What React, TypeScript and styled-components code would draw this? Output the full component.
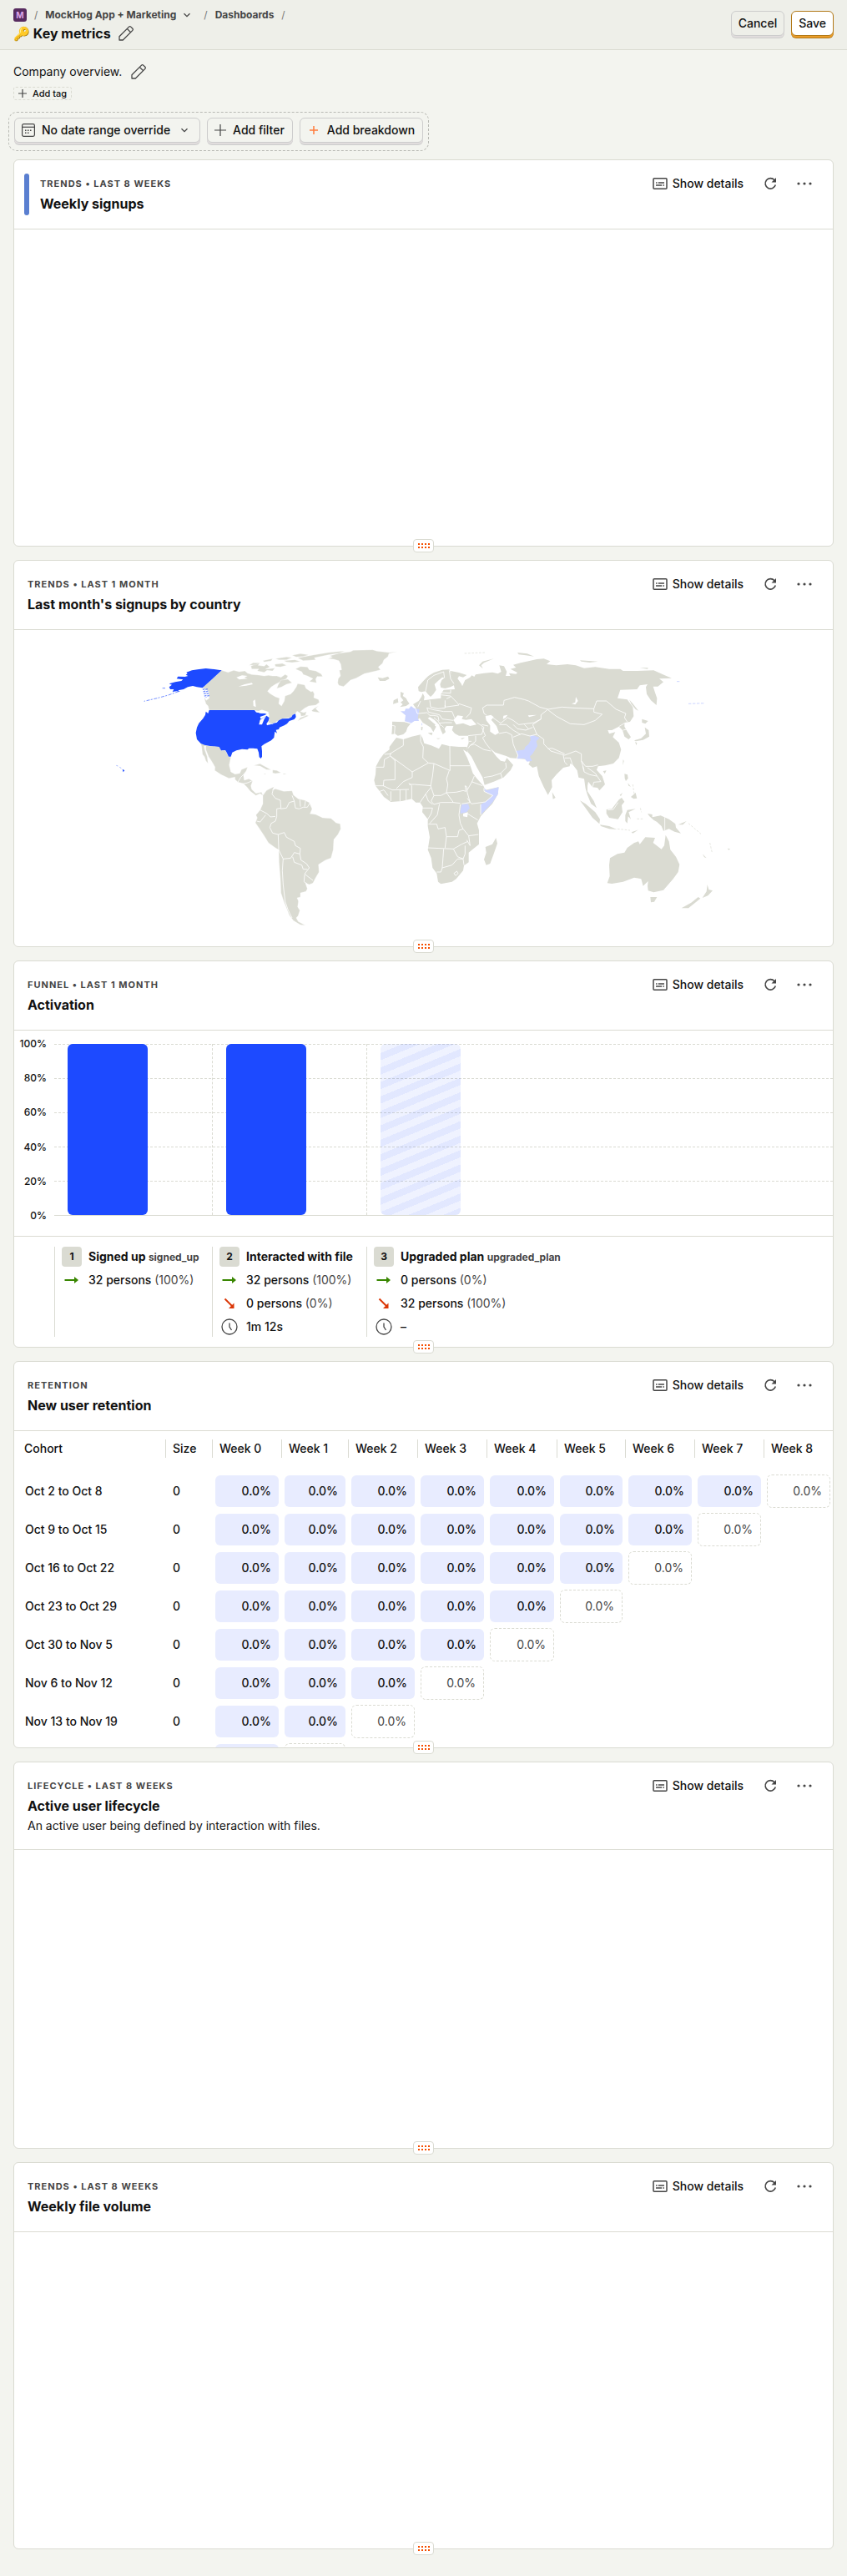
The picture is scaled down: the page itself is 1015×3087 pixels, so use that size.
import React from "react";
import styled, { createGlobalStyle } from "styled-components";

const GlobalStyle = createGlobalStyle`
  *, *::before, *::after { box-sizing: border-box; }
  body {
    margin: 0;
    background: #f3f4ef;
    color: #111;
    font-family: Inter, "Liberation Sans", sans-serif;
    font-size: 14px;
    line-height: 20px;
  }
  button { font: inherit; color: inherit; cursor: pointer; }
  h1, h2, p { margin: 0; }
  svg { display: block; flex: none; }
`;

const LINE = "#dadbd2";
const MUTED = "#454545";
const BLUE = "#1d4aff";

/* ---------- icons ---------- */

const IconEdit = () => (
  <svg width="20" height="20" viewBox="0 0 20 20" fill="none" stroke={MUTED} strokeWidth="1.300" strokeLinejoin="round">
    <path d="M2 18v-4.300L13.600 2.100a1.500 1.500 0 0 1 2.100 0l2.200 2.200a1.500 1.500 0 0 1 0 2.100L6.300 18zM11.300 4.400l4.300 4.300" />
  </svg>
);

const IconChevron = ({ size = 10 }: { size?: number }) => (
  <svg width={size} height={size} viewBox="0 0 10 10" fill="none" stroke={MUTED} strokeWidth="1.300">
    <path d="M1.500 3.300 5 6.700l3.500-3.400" />
  </svg>
);

const IconPlus = ({ size, color = MUTED, weight = 1.2 }: { size: number; color?: string; weight?: number }) => (
  <svg width={size} height={size} viewBox={`0 0 ${size} ${size}`} stroke={color} strokeWidth={weight}>
    <path d={`M${size / 2} 0V${size}M0 ${size / 2}H${size}`} />
  </svg>
);

const IconCalendar = () => (
  <svg width="16" height="16" viewBox="0 0 16 16" fill="none" stroke={MUTED} strokeWidth="1.200">
    <rect x="0.600" y="0.600" width="14.800" height="14.800" rx="1.800" />
    <path d="M0.600 4.300h14.800" />
    <path d="M4 8.300h8.500M4 11.300h6" strokeDasharray="1.500 1.500" strokeWidth="1.400" />
  </svg>
);

const IconDetails = () => (
  <svg width="18" height="14" viewBox="0 0 18 14" fill="none" stroke={MUTED} strokeWidth="1.500">
    <rect x="1" y="0.800" width="16" height="12.400" rx="1" />
    <path d="M4 6h1.500M6.800 6H14M4 9h7.200M12.500 9H14" />
  </svg>
);

const IconRefresh = () => (
  <svg width="16" height="16" viewBox="0 0 16 16" fill="none" stroke={MUTED} strokeWidth="1.600">
    <path d="M13 3.800A6.200 6.200 0 1 0 14.300 9.500" />
    <path d="M15 1v5.500H9.500z" fill={MUTED} stroke="none" />
  </svg>
);

const IconMore = () => (
  <svg width="18" height="4" viewBox="0 0 18 4" fill={MUTED}>
    <circle cx="2" cy="2" r="1.600" />
    <circle cx="9" cy="2" r="1.600" />
    <circle cx="16" cy="2" r="1.600" />
  </svg>
);

const IconConverted = () => (
  <svg width="20" height="20" viewBox="0 0 20 20" fill="none" stroke="#388600" strokeWidth="2">
    <path d="M1.500 10H14" />
    <path d="M13 6l5 4-5 4z" fill="#388600" stroke="none" />
  </svg>
);

const IconDropped = () => (
  <svg width="20" height="20" viewBox="0 0 20 20" fill="none" stroke="#db3707" strokeWidth="2">
    <path d="M4.500 4.500 13 13" />
    <path d="M15.500 9.500V16H9z" fill="#db3707" stroke="none" />
  </svg>
);

const IconClock = () => (
  <svg width="20" height="20" viewBox="0 0 20 20" fill="none" stroke={MUTED} strokeWidth="1.300">
    <circle cx="10" cy="10" r="9" />
    <path d="M10 5.500V10l2.500 4" />
  </svg>
);

const IconGrip = () => (
  <svg width="17" height="6" viewBox="0 0 17 6" fill="#f54e00" shapeRendering="crispEdges">
    {[2, 6, 10, 14].map((x) => (
      <React.Fragment key={x}>
        <rect x={x} y="0" width="2" height="2" />
        <rect x={x} y="4" width="2" height="2" />
      </React.Fragment>
    ))}
  </svg>
);

/* ---------- page header ---------- */

const Header = styled.header`
  display: flex;
  justify-content: space-between;
  align-items: flex-start;
  height: 60px;
  padding: 10px 16px 0;
  background: #eeefe9;
  border-bottom: 1px solid ${LINE};
`;

const Crumbs = styled.nav`
  display: flex;
  align-items: center;
  gap: 9px;
  height: 16px;
  font-size: 12px;
  line-height: 16px;
  font-weight: 700;
  color: ${MUTED};
  a { color: inherit; text-decoration: none; display: flex; align-items: center; gap: 8px; }
  a svg { margin-right: 6px; }
`;

const Slash = styled.span`
  font-weight: 400;
  color: #777;
`;

const Lettermark = styled.span`
  display: grid;
  place-items: center;
  width: 16px;
  height: 16px;
  border-radius: 3px;
  background: #572b5f;
  color: #dba5e8;
  font-size: 10px;
  font-weight: 700;
`;

const TitleRow = styled.div`
  display: flex;
  align-items: center;
  gap: 8px;
  height: 28px;
`;

const PageTitle = styled.h1`
  font-size: 16px;
  line-height: 24px;
  font-weight: 700;
`;

const IconButton = styled.button`
  display: grid;
  place-items: center;
  padding: 0;
  border: 0;
  background: none;
`;

const Actions = styled.div`
  display: flex;
  gap: 8px;
  padding-top: 3px;
`;

const RaisedButton = styled.button<{ $primary?: boolean }>`
  display: flex;
  align-items: center;
  height: 30px;
  margin-bottom: 3px;
  padding: 0 8px;
  border: 1px solid ${(p) => (p.$primary ? "#b17816" : "#cccccc")};
  border-radius: 6px;
  background: ${(p) => (p.$primary ? "#fff" : "inherit")};
  box-shadow: ${(p) => (p.$primary ? "0 2px 0 #eb9d2a, 0 3px 0 #b17816" : "0 2px 0 #e1dddd, 0 3px 0 #cccccc")};
  font-weight: 500;
`;

/* ---------- dashboard ---------- */

const Main = styled.main`
  padding: 16px 16px 32px;
`;

const Intro = styled.div`
  display: flex;
  align-items: center;
  gap: 10px;
  height: 20px;
`;

const TagButton = styled.button`
  display: flex;
  align-items: center;
  gap: 7px;
  height: 16px;
  margin-top: 8px;
  padding: 0 5px;
  border: 1px dashed ${LINE};
  border-radius: 3px;
  background: none;
  font-size: 11px;
  line-height: 14px;
  font-weight: 500;
`;

const FilterBar = styled.div`
  display: flex;
  gap: 8px;
  width: fit-content;
  margin: 14px 0 10px -6px;
  padding: 6px;
  border: 1px dashed #b9bab4;
  border-radius: 10px;
  background: #f3f4ef;
`;

const FilterButton = styled(RaisedButton)`
  gap: 8px;
  padding: 0 9px 0 8px;
`;

const ChevronSlot = styled.span`
  display: flex;
  padding: 0 4px;
`;

const PlusSlot = styled.span`
  display: flex;
  padding: 0 3px;
`;

const Tiles = styled.div`
  display: grid;
  grid-auto-rows: 464px;
  gap: 16px;
`;

const Tile = styled.section`
  position: relative;
  display: flex;
  flex-direction: column;
  border: 1px solid ${LINE};
  border-radius: 6px;
  background: #fff;
`;

const TileHeader = styled.div`
  display: flex;
  gap: 13px;
  padding: 16px 16px 16px 12px;
  min-height: 83px;
  border-bottom: 1px solid ${LINE};
`;

const Ribbon = styled.span`
  width: 6px;
  height: 50px;
  border-radius: 3px;
  background: #5a7fd0;
`;

const TileHead = styled.div<{ $indent: boolean }>`
  flex: 1;
  padding-left: ${(p) => (p.$indent ? 4 : 0)}px;
`;

const Kicker = styled.div`
  display: flex;
  align-items: center;
  height: 24px;
  font-size: 11px;
  line-height: 16px;
  font-weight: 700;
  letter-spacing: 1px;
  text-transform: uppercase;
  color: ${MUTED};
`;

const TileTitle = styled.h2`
  font-size: 16px;
  line-height: 24px;
  font-weight: 700;
`;

const TileNote = styled.p`
  line-height: 24px;
`;

const Controls = styled.div`
  display: flex;
  align-items: center;
  height: 24px;
  gap: 24px;
  padding-right: 9px;
`;

const DetailsButton = styled(IconButton)`
  display: flex;
  align-items: center;
  gap: 6px;
  font-weight: 500;
`;

const TileBody = styled.div`
  flex: 1;
  min-height: 0;
  overflow: hidden;
`;

const ResizeHandle = styled.button`
  position: absolute;
  left: 0;
  right: 0;
  bottom: -8px;
  margin: 0 auto;
  display: grid;
  place-items: center;
  width: 25px;
  height: 16px;
  padding: 0;
  border: 1px solid ${LINE};
  border-radius: 4px;
  background: #fff;
`;

type InsightTileProps = {
  kicker: string;
  title: string;
  note?: string;
  ribbon?: boolean;
  children?: React.ReactNode;
};

const InsightTile = ({ kicker, title, note, ribbon = false, children }: InsightTileProps) => (
  <Tile>
    <TileHeader>
      {ribbon && <Ribbon />}
      <TileHead $indent={!ribbon}>
        <Kicker>{kicker}</Kicker>
        <TileTitle>{title}</TileTitle>
        {note && <TileNote>{note}</TileNote>}
      </TileHead>
      <Controls>
        <DetailsButton type="button"><IconDetails />Show details</DetailsButton>
        <IconButton type="button" aria-label="Refresh"><IconRefresh /></IconButton>
        <IconButton type="button" aria-label="More"><IconMore /></IconButton>
      </Controls>
    </TileHeader>
    <TileBody>{children}</TileBody>
    <ResizeHandle type="button" aria-label="Resize"><IconGrip /></ResizeHandle>
  </Tile>
);

/* ---------- world map ---------- */

const MapSvg = styled.svg`
  width: 100%;
  height: 100%;
`;

const AMERICAS = [
  // Greenland
  "795,78 830,68 870,63 880,58 950,56 965,61 1010,66 1038,62 1008,70 1005,80 990,92 985,105 970,118 978,128 950,135 920,142 890,158 870,165 852,182 845,188 828,184 824,175 826,160 834,150 830,130 838,128 835,108 828,95 810,90 790,88 805,82",
  // Canada
  "407,130 338,193 348,196 360,205 362,230 352,238 344,228 350,250 358,258 362,273 525,273 540,278 552,272 575,280 578,300 575,318 590,322 612,310 630,303 655,300 665,288 672,285 678,277 690,284 692,295 712,292 690,300 680,312 700,302 720,293 708,290 712,278 702,282 690,278 705,266 720,258 745,255 758,245 755,235 738,228 740,215 735,205 728,207 710,195 705,182 680,178 675,190 665,205 655,215 635,222 632,240 622,258 612,250 615,230 600,225 580,213 572,205 585,190 600,180 620,170 640,160 645,150 635,145 620,155 605,150 590,150 575,148 560,150 540,147 515,145 500,140 490,132 470,135 450,130 430,137",
  // Arctic islands
  "512,115 525,108 545,102 538,112 560,115 568,108 580,118 565,125 598,122 590,132 570,130 560,137 535,132 540,125 515,125",
  "505,112 520,103 542,103 530,110",
  "598,108 625,105 640,112 618,118 600,116",
  "672,125 690,116 715,118 722,128 745,132 765,143 770,152 750,152 745,162 748,175 722,170 735,160 715,150 700,145 695,135",
  "620,165 645,162 660,175 640,180 622,190 605,195 610,182",
  "555,95 590,88 585,96 560,100", "600,88 640,82 660,84 640,92 612,92", "630,95 670,92 690,98 660,102 640,100",
  "680,85 740,74 790,66 850,60 830,68 790,74 740,85 745,92 700,95", "660,76 690,70 720,74 700,80 675,82",
  "735,278 760,282 745,268 755,258 740,266 730,275",
  // Mexico and Central America
  "332,393 345,398 365,402 398,403 408,418 420,417 432,440 440,442 434,470 440,495 455,503 472,500 478,487 500,478 495,492 485,505 488,525 505,520 518,528 512,545 515,558 530,572 550,568 555,580 545,573 530,580 510,565 498,550 485,537 465,532 455,522 455,514 433,518 405,505 382,490 383,478 370,455 360,440 350,415 350,402 344,402 346,415 355,440 358,465 350,455 345,440 338,432 335,405",
  "522,472 545,466 575,482 585,488 568,487 545,474", "590,488 605,490 620,498 600,501 590,499", "628,501 638,502 636,504 628,504", "558,501 568,502 562,504",
  // South America
  "555,580 568,562 595,548 590,560 600,556 630,565 660,563 665,578 682,592 705,597 722,605 732,628 725,645 745,648 770,660 800,662 818,678 833,682 835,700 825,720 810,738 808,775 800,805 780,812 755,828 757,855 745,875 735,895 722,900 708,895 715,915 710,925 690,930 690,945 678,948 683,960 680,980 688,993 682,1012 675,1020 682,1033 708,1047 690,1045 665,1030 650,1010 640,985 630,960 620,930 618,880 613,820 612,775 600,768 575,750 560,725 540,695 528,678 535,660 530,650 545,632 555,610",
];

const USA = [
  "362,273 525,273 530,280 548,284 575,284 560,292 545,297 548,305 568,293 578,300 575,312 568,322 570,328 590,320 605,318 612,310 625,304 648,303 658,298 662,290 672,286 674,298 668,306 650,312 642,322 632,328 615,335 612,342 602,344 606,356 598,350 595,372 585,382 560,395 550,403 552,420 552,440 548,447 542,442 540,425 535,412 520,410 505,410 500,415 480,413 460,418 445,425 440,440 432,440 425,425 420,417 405,418 398,405 380,403 365,402 345,398 332,393 318,378 314,355 318,335 325,320 340,303 348,290 350,278 358,285",
  "407,130 395,128 380,126 350,123 320,127 300,130 280,137 284,142 278,146 286,150 275,153 250,152 245,160 268,163 262,168 240,172 218,178 228,182 218,190 222,198 235,198 230,207 245,205 258,207 250,202 270,198 285,190 303,186 318,190 338,193",
  "50,485 58,490 53,496",
];

const OLD_WORLD = [
  // Iceland, Britain, Ireland
  "-142,155 -125,158 -105,152 -100,160 -115,168 -135,168",
  "-60,207 -48,212 -52,222 -40,230 -35,240 -28,250 -40,258 -62,262 -52,252 -60,245 -50,238 -60,225",
  "-85,238 -70,230 -68,245 -87,251",
  // Iberia
  "-90,314 -45,316 -24,322 -35,335 -40,350 -50,360 -70,365 -80,358 -92,360 -90,335",
  // Scandinavia
  "3,190 20,170 40,150 60,138 90,128 115,127 124,145 130,168 134,182 120,190 100,195 85,192 82,180 88,165 98,157 90,155 78,165 62,180 68,200 58,215 48,225 38,215 30,205 15,208 5,205",
  // Eurasian mainland
  "120,132 150,138 178,147 165,155 150,151 145,160 158,178 162,187 172,165 190,155 196,148 205,153 210,145 240,140 270,137 290,142 302,135 295,112 312,115 322,135 318,150 335,150 330,140 355,143 360,138 335,125 355,120 345,110 372,103 400,97 430,90 455,88 478,97 465,108 500,112 540,108 570,112 600,122 640,118 690,125 730,125 740,132 790,132 850,130 890,148 915,158 870,160 885,172 865,188 848,188 855,210 862,230 860,255 840,238 825,215 822,190 828,180 800,184 790,198 730,200 720,230 755,235 775,262 778,295 765,315 745,318 745,332 755,350 768,370 760,378 745,368 738,345 725,332 700,345 685,345 690,358 712,352 703,370 725,390 733,415 725,445 705,465 675,472 650,475 645,488 665,510 675,540 655,562 648,552 630,550 615,530 612,545 612,565 635,600 645,625 625,610 612,578 605,555 600,520 580,515 575,490 560,470 550,465 548,475 525,480 500,505 483,525 485,550 470,578 455,550 437,510 430,475 415,480 400,468 405,458 390,450 370,448 335,445 320,438 308,434 280,425 262,410 285,440 300,455 315,458 322,445 345,470 335,490 310,515 275,530 242,542 235,515 215,480 195,440 183,425 178,410 185,390 183,365 150,365 135,357 125,345 130,330 105,330 98,340 102,352 92,360 85,345 78,325 62,308 45,298 38,302 65,325 58,340 50,332 45,325 20,305 10,300 -5,312 0,285 -8,262 -15,252 5,240 15,225 20,212 26,225 24,238 45,235 85,230 85,215 95,200 135,198",
  // Italy and the Mediterranean islands
  "5,297 32,297 38,312 68,332 58,352 48,335 20,318", "38,355 55,354 52,364", "14,333 20,334 18,346 14,345", "68,374 85,374 75,377", "155,375 172,371 162,378",
  // Russian Arctic
  "222,112 235,98 275,88 240,103 230,112 236,124", "360,66 395,70 420,80 390,76 365,73", "585,94 650,98 620,102 590,98", "800,121 830,121 828,125",
  // Sakhalin and Japan
  "762,235 775,250 795,275 785,270 770,252",
  "808,305 830,312 820,322 808,318", "818,335 832,345 834,368 812,380 785,385 780,382 805,374 822,358", "783,388 790,390 788,400",
  // South-east Asia
  "740,450 743,456 739,472", "668,492 680,490 674,502", "485,568 497,588 488,593",
  "745,502 756,505 758,518 750,528 746,518", "757,535 768,548 760,545", "768,585 785,570 790,590 778,592", "728,578 738,570 732,582",
  "585,598 605,610 640,640 657,665 655,682 630,660 605,625", "657,685 690,690 718,702 690,700 660,690",
  "680,630 700,628 725,595 735,588 745,602 735,615 738,640 722,665 690,660 680,645", "748,650 755,632 785,628 760,640 768,665 758,655 755,680 748,672", "770,712 795,703 775,716",
  "828,645 845,648 845,658 875,652 905,665 928,682 930,695 948,716 925,710 905,700 885,707 878,690 862,675 850,668 835,655", "938,685 968,672 955,685",
  // Australia and New Zealand
  "693,805 720,790 745,785 755,768 780,750 795,745 800,755 820,730 855,732 848,750 878,773 888,760 893,722 905,745 910,775 930,800 943,828 938,855 920,880 885,920 850,928 830,922 828,905 830,888 812,905 805,880 780,875 740,890 700,897 683,895 692,870 690,830",
  "838,945 862,945 852,962 840,964",
  "1043,900 1048,918 1062,922 1045,940 1025,948 1040,925", "1010,945 1018,950 975,985 950,985 985,965", "1025,790 1040,805 1032,802", "1115,770 1125,772 1120,776",
  // Madagascar
  "283,732 288,752 275,790 262,825 248,830 240,810 248,785 245,765 270,755",
  // Africa
  "-75,372 -50,378 -20,368 12,361 20,375 25,392 50,400 78,412 88,395 115,402 150,405 178,405 182,425 165,415 180,445 190,470 200,500 215,520 238,545 245,560 292,550 290,575 270,610 245,635 228,655 215,680 222,705 222,755 185,785 185,820 168,832 165,850 140,880 125,890 85,898 75,890 70,860 55,840 50,805 38,775 45,730 38,690 38,665 18,640 20,620 10,605 -5,605 -20,592 -55,600 -95,603 -120,585 -135,565 -150,545 -155,525 -150,505 -148,475 -135,450 -120,430 -100,415 -100,405 -85,385",
];

const LIGHT = [
  "-60,277 -45,277 -42,268 -30,268 -22,258 -12,266 8,270 5,285 2,300 6,312 -10,312 -22,320 -45,314 -42,292",
  "240,553 250,562 293,550 290,575 270,605 245,632 230,648 228,612 245,603 272,580 245,568",
  "160,612 183,610 188,625 178,640 155,645 155,633",
  "355,420 385,415 388,405 400,395 408,380 405,366 415,362 440,372 428,385 432,402 415,430 405,440 413,455 395,458 385,447 358,448 362,435",
  "15,320 18,320 18,328 16,328",
];

const WATER_WEST = [
  "460,155 480,148 500,150 488,156 500,160 470,163", "467,188 490,180 515,175 519,180 495,185", "520,240 527,235 530,262 521,258",
  "530,280 550,272 572,280 575,290 562,285 548,284", "541,325 545,308 568,293 560,305 552,325", "572,326 598,318 590,323",
];

const WATER_EAST = [
  "130,308 145,292 165,295 160,305 175,308 195,305 213,325 190,330 165,320 140,325",
  "245,295 265,290 275,298 266,308 285,330 294,355 280,362 262,350 262,328 248,310",
  "310,293 325,290 318,300 308,305", "398,292 430,290 402,298", "555,250 568,245 570,225 578,240 568,253", "165,645 182,640 180,658 165,655",
];

const BORDERS_WEST =
  "M592,558 588,575 600,590 618,597 620,625 605,628 605,655 600,672 585,680 580,695 590,715 610,720 612,775M545,632 570,645 582,657 600,655M533,672 545,675 565,650M610,720 632,713 640,730 668,745 672,760 690,770 688,790M612,775 628,808 655,805 668,785 688,790 692,812 712,825 722,840M662,800 668,820 695,830 700,845 715,845M628,808 625,850 628,900 635,960 645,990 660,1020M722,840 705,862 735,885M705,865 703,890 715,898M618,628 640,625 650,605 668,600 660,580M668,600 672,625 685,628 700,622 715,622 725,605M688,595 690,620M708,600 705,620M725,645 740,640M465,532 475,515 485,505M485,537 498,535 515,528";

const BORDERS_EAST =
  "M117,400 118,490 60,465 40,463 -18,495M12,361 12,385 22,405 20,445 40,463M118,473 190,473M105,570 110,540 105,520 115,490M60,465 55,510 48,545 60,580 85,580 105,570 130,605M105,570 140,568 165,562 175,565 172,545 178,548 180,570 190,605 160,610M180,560 197,530 205,510M195,530 235,545M240,553 240,565 272,580 245,603 195,610 180,590M228,650 228,612M60,580 50,600 60,612 85,605 130,605 155,608M155,612 150,650 155,680 165,700 185,725M180,645 218,668M185,725 220,720M185,725 190,760 178,740M40,683 70,683 75,700 100,695 105,728 145,728 150,705 165,700M38,768 130,772 160,755 182,745M95,772 90,840 85,855 70,855M90,840 125,830 145,808 165,808 168,830M130,772 145,800 165,808 172,790 172,760M105,728 100,768M132,860 142,852 147,860 138,868zM-98,437 -18,495M-80,450 -80,523 -120,525M-98,437 -95,430 -118,432M-98,437 -80,455M-50,378 -50,400 -98,430M-100,440 -118,450 -120,478 -148,478M-18,495 -18,515 -50,530 -75,555M-30,540 -10,540 50,545M-20,592 -20,545 -30,535M-40,600 -40,560M-62,600 -62,560M-95,600 -95,565M-120,525 -122,545 -90,560 -30,558M-150,545 -120,545M-135,565 -120,560 -105,580M10,605 30,575 50,550M18,625 55,625 50,645 35,670M80,610 72,650 45,680M30,575 40,600 55,612" +
  "M235,265 250,255 310,255 312,238 350,227 385,235 400,240 440,262 470,270 445,290 445,305 420,318 390,322 365,325 345,310 325,300 300,320 272,300M235,265 240,285 250,292M470,270 520,262 560,265 635,268 645,240 680,240 715,270 750,285 745,300 755,315M470,272 500,295 550,322 600,325 640,310 665,288 635,280 635,268M445,305 415,325 430,360 455,378 455,395 480,420 530,435 570,420 590,430 590,455 605,475 630,475 650,470M470,412 485,410 530,430M525,435 530,460 540,470M530,445 550,445 558,470M295,325 320,325 345,345 370,360M345,325 360,340 390,345 415,335M385,325 400,340M232,335 245,365 235,372 245,390 262,412M294,357 320,352 340,362 345,395 355,420 362,435 358,448M345,370 375,358 405,366 430,360M183,365 210,362 232,360 240,335 215,318M232,325 255,330M183,410 190,400 205,395 240,415 265,420M210,365 210,385 190,400M185,385 195,385M240,515 270,510 300,500 320,480 318,462M300,500 305,518M595,475 600,495 620,505 645,510M612,480 640,500 660,530M630,550 635,532 660,530M590,455 600,490M725,332 745,320M740,345 752,342" +
  "M-8,262 0,285 5,285 35,282 45,292M12,240 2,262M45,238 48,262 75,268 100,265 100,238M35,265 60,272 95,278 125,278 135,302M100,255 100,262 150,255 145,248 120,222 85,218M85,210 120,212 120,200M120,225 105,232M150,250 195,265 190,285 175,300M35,265 40,280 60,285 80,290M45,292 60,292 75,295 78,312M60,300 75,312 85,330M80,290 90,305 130,310M78,320 100,318 125,318M88,328 95,335M115,130 120,160 132,178M30,205 38,165 60,148 95,135 98,157M-90,328 -80,330 -82,358M-24,320 -45,314M890,658 890,705M685,632 705,630 722,605";

const Shapes = ({ points, fill }: { points: string[]; fill: string }) => (
  <g fill={fill}>
    {points.map((p) => (
      <polygon key={p} points={p} />
    ))}
  </g>
);

const WorldMap = () => (
  <MapSvg viewBox="-339 -15 2943 1137" role="img" aria-label="Signups by country">
    <g>
      <g stroke="#fff" strokeWidth="1">
        <Shapes points={AMERICAS} fill={LINE} />
      </g>
      <Shapes points={USA} fill={BLUE} />
      <Shapes points={WATER_WEST} fill="#fff" />
      <path d={BORDERS_WEST} fill="none" stroke="#fff" strokeWidth="2.500" />
      <path d="M252,206 215,219 175,230 128,241M194,194 204,194" fill="none" stroke={BLUE} strokeWidth="3" strokeDasharray="12 5 6 4" opacity="0.600" />
      <path d="M342,196 350,228M352,196 360,226" fill="none" stroke={BLUE} strokeWidth="8" strokeDasharray="4 4" opacity="0.600" />
      <path d="M28,472 34,474M40,478 46,482" fill="none" stroke={BLUE} strokeWidth="2" opacity="0.600" />
    </g>
    <g transform="translate(1110 0)">
      <Shapes points={OLD_WORLD} fill={LINE} />
      <Shapes points={LIGHT} fill="#ccd5ff" />
      <Shapes points={WATER_EAST} fill="#fff" />
      <path d={BORDERS_EAST} fill="none" stroke="#fff" strokeWidth="2.500" />
      <path d="M933,170 945,170M975,250 1035,248" fill="none" stroke="#ccd5ff" strokeWidth="3" strokeDasharray="10 5" />
      <path d="M720,700 765,705M790,664 815,664M975,680 1020,718M1052,750 1060,785M170,69 245,66M775,540 780,575M802,625 806,640" fill="none" stroke={LINE} strokeWidth="2" strokeDasharray="8 5" />
    </g>
  </MapSvg>
);

/* ---------- funnel ---------- */

const STEP_COLUMNS = "189px 185px 1fr";

const Chart = styled.div`
  display: grid;
  grid-template-columns: 48px 1fr;
  height: 247px;
  padding-top: 16px;
  border-bottom: 1px solid ${LINE};
`;

const Axis = styled.div`
  display: flex;
  flex-direction: column;
  justify-content: space-between;
  height: 222px;
  margin-top: -8px;
  padding-right: 9px;
  text-align: right;
  font-size: 12px;
  line-height: 16px;
  font-weight: 500;
`;

const Plot = styled.div`
  display: grid;
  grid-template-columns: ${STEP_COLUMNS};
  height: 206px;
  border-bottom: 1px solid ${LINE};
  background: repeating-linear-gradient(to right, transparent 0 3px, #fff 3px 5px),
    repeating-linear-gradient(to bottom, ${LINE} 0 1px, transparent 1px 41px);
`;

const PlotStep = styled.div`
  padding-left: 16px;
  & + & { border-left: 1px dashed ${LINE}; }
`;

const Bar = styled.div<{ $empty?: boolean }>`
  width: 96px;
  height: 100%;
  border-radius: 6px;
  background: ${(p) =>
    p.$empty
      ? "repeating-linear-gradient(-22.5deg, rgba(29, 74, 255, 0.130) 0 8px, rgba(29, 74, 255, 0.070) 8px 16px)"
      : BLUE};
`;

const Legend = styled.div`
  display: grid;
  grid-template-columns: ${STEP_COLUMNS};
  height: 108px;
  margin: 12px 0 0 48px;
`;

const LegendStep = styled.div`
  display: flex;
  flex-direction: column;
  gap: 4px;
  padding-left: 8px;
  border-left: 1px solid ${LINE};
  white-space: nowrap;
`;

const LegendRow = styled.div<{ $strong?: boolean }>`
  display: flex;
  align-items: center;
  gap: 8px;
  height: 24px;
  font-weight: ${(p) => (p.$strong ? 700 : 500)};
`;

const Glyph = styled.span<{ $filled?: boolean }>`
  display: grid;
  place-items: center;
  width: 24px;
  height: 24px;
  border-radius: 4px;
  background: ${(p) => (p.$filled ? LINE : "none")};
  font-size: 12px;
`;

const Faint = styled.span`
  font-weight: 400;
  color: ${MUTED};
`;

const EventName = styled.span`
  font-size: 12px;
  font-weight: 700;
  color: ${MUTED};
`;

type Step = { name: string; event?: string; converted: [string, string]; dropped?: [string, string]; time?: string };

const STEPS: Step[] = [
  { name: "Signed up", event: "signed_up", converted: ["32 persons", "(100%)"] },
  { name: "Interacted with file", converted: ["32 persons", "(100%)"], dropped: ["0 persons", "(0%)"], time: "1m 12s" },
  { name: "Upgraded plan", event: "upgraded_plan", converted: ["0 persons", "(0%)"], dropped: ["32 persons", "(100%)"], time: "–" },
];

const Funnel = () => (
  <>
    <Chart>
      <Axis>
        {["100%", "80%", "60%", "40%", "20%", "0%"].map((t) => (
          <span key={t}>{t}</span>
        ))}
      </Axis>
      <Plot>
        {STEPS.map((s, i) => (
          <PlotStep key={s.name}><Bar $empty={i === 2} /></PlotStep>
        ))}
      </Plot>
    </Chart>
    <Legend>
      {STEPS.map((s, i) => (
        <LegendStep key={s.name}>
          <LegendRow $strong>
            <Glyph $filled>{i + 1}</Glyph>
            <span>{s.name} {s.event && <EventName>{s.event}</EventName>}</span>
          </LegendRow>
          <LegendRow>
            <Glyph><IconConverted /></Glyph>
            <span>{s.converted[0]} <Faint>{s.converted[1]}</Faint></span>
          </LegendRow>
          {s.dropped && (
            <LegendRow>
              <Glyph><IconDropped /></Glyph>
              <span>{s.dropped[0]} <Faint>{s.dropped[1]}</Faint></span>
            </LegendRow>
          )}
          {s.time && (
            <LegendRow><Glyph><IconClock /></Glyph>{s.time}</LegendRow>
          )}
        </LegendStep>
      ))}
    </Legend>
  </>
);

/* ---------- retention ---------- */

const Table = styled.table`
  width: 100%;
  table-layout: fixed;
  border-collapse: collapse;
  font-weight: 500;
`;

const HeadCell = styled.th`
  height: 49px;
  padding: 10px 0 17px;
  font-weight: 500;
  text-align: left;
  white-space: nowrap;
  span { display: block; padding-left: 8px; line-height: 22px; border-left: 1px solid ${LINE}; }
  &:first-child span { padding-left: 12px; border-left: 0; }
`;

const LabelCell = styled.td`
  height: 46px;
  padding: 0 0 0 9px;
  white-space: nowrap;
  &:first-child { padding-left: 13px; }
`;

const ValueCell = styled.td`
  height: 46px;
  padding: 0 3px 0 4px;
`;

const Value = styled.div<{ $partial?: boolean }>`
  height: ${(p) => (p.$partial ? 40 : 38)}px;
  line-height: 38px;
  padding-right: 9px;
  border: ${(p) => (p.$partial ? `1px dashed ${LINE}` : "0")};
  border-radius: 6px;
  background: ${(p) => (p.$partial ? "none" : "#e8ecff")};
  color: ${(p) => (p.$partial ? MUTED : "inherit")};
  font-weight: ${(p) => (p.$partial ? 400 : 500)};
  text-align: right;
`;

const COLUMN_WIDTHS = [181, 56, 83, 80, 83, 83, 84, 82, 83, 83];
const WEEKS = [0, 1, 2, 3, 4, 5, 6, 7, 8];
const COHORTS = [
  "Oct 2 to Oct 8",
  "Oct 9 to Oct 15",
  "Oct 16 to Oct 22",
  "Oct 23 to Oct 29",
  "Oct 30 to Nov 5",
  "Nov 6 to Nov 12",
  "Nov 13 to Nov 19",
  "",
];

const Retention = () => (
  <Table>
    <colgroup>
      {COLUMN_WIDTHS.map((w, i) => (
        <col key={i} width={w} />
      ))}
      <col />
    </colgroup>
    <thead>
      <tr>
        <HeadCell><span>Cohort</span></HeadCell>
        <HeadCell><span>Size</span></HeadCell>
        {WEEKS.map((w) => (
          <HeadCell key={w}><span>Week {w}</span></HeadCell>
        ))}
      </tr>
    </thead>
    <tbody>
      {COHORTS.map((label, row) => (
        <tr key={label}>
          <LabelCell>{label}</LabelCell>
          <LabelCell>{label && "0"}</LabelCell>
          {WEEKS.map((w) => (
            <ValueCell key={w}>
              {w <= 8 - row && <Value $partial={w === 8 - row}>{label && "0.0%"}</Value>}
            </ValueCell>
          ))}
        </tr>
      ))}
    </tbody>
  </Table>
);

/* ---------- page ---------- */

export default function App() {
  return (
    <>
      <GlobalStyle />
      <Header>
        <div>
          <Crumbs aria-label="Breadcrumb">
            <Lettermark>M</Lettermark>
            <Slash>/</Slash>
            <a href="#project">MockHog App + Marketing <IconChevron /></a>
            <Slash>/</Slash>
            <a href="#dashboards">Dashboards</a>
            <Slash>/</Slash>
          </Crumbs>
          <TitleRow>
            <PageTitle>🔑 Key metrics</PageTitle>
            <IconButton type="button" aria-label="Edit title"><IconEdit /></IconButton>
          </TitleRow>
        </div>
        <Actions>
          <RaisedButton type="button">Cancel</RaisedButton>
          <RaisedButton type="button" $primary>Save</RaisedButton>
        </Actions>
      </Header>
      <Main>
        <Intro>
          <p>Company overview.</p>
          <IconButton type="button" aria-label="Edit description"><IconEdit /></IconButton>
        </Intro>
        <TagButton type="button"><IconPlus size={10} />Add tag</TagButton>
        <FilterBar>
          <FilterButton type="button">
            <IconCalendar />No date range override<ChevronSlot><IconChevron /></ChevronSlot>
          </FilterButton>
          <FilterButton type="button"><IconPlus size={14} />Add filter</FilterButton>
          <FilterButton type="button">
            <PlusSlot><IconPlus size={10} color="#ff7b3d" weight={1.5} /></PlusSlot>Add breakdown
          </FilterButton>
        </FilterBar>
        <Tiles>
          <InsightTile kicker="Trends • Last 8 weeks" title="Weekly signups" ribbon />
          <InsightTile kicker="Trends • Last 1 month" title="Last month's signups by country"><WorldMap /></InsightTile>
          <InsightTile kicker="Funnel • Last 1 month" title="Activation"><Funnel /></InsightTile>
          <InsightTile kicker="Retention" title="New user retention"><Retention /></InsightTile>
          <InsightTile
            kicker="Lifecycle • Last 8 weeks"
            title="Active user lifecycle"
            note="An active user being defined by interaction with files."
          />
          <InsightTile kicker="Trends • Last 8 weeks" title="Weekly file volume" />
        </Tiles>
      </Main>
    </>
  );
}
